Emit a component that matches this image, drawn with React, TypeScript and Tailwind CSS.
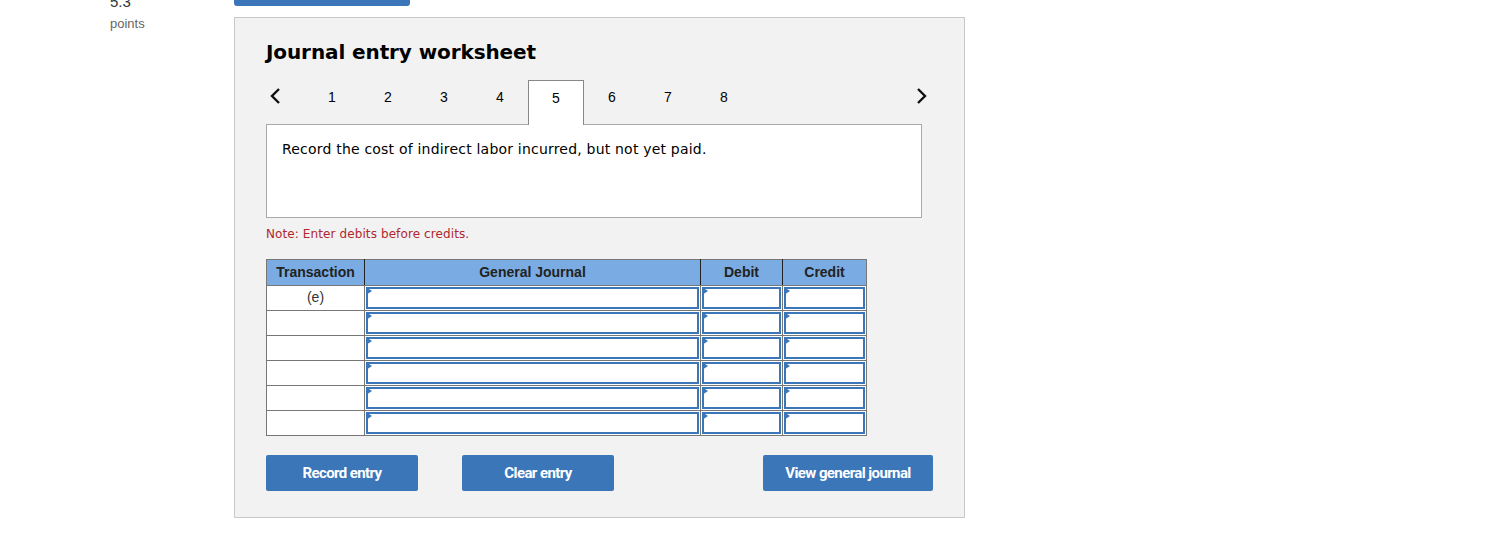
const TABS = [1, 2, 3, 4, 5, 6, 7, 8];
const ACTIVE = 5;
const ROWS = ["(e)", "", "", "", "", ""];

function Cell({ w }: { w: string }) {
  return (
    <td className={`${w} border border-[#777] p-0 bg-white`}>
      <div className="relative h-[22px] m-px border-2 border-[#3a76b8] bg-white">
        <span className="absolute left-[-2px] top-[-2px] w-0 h-0 border-y-[4px] border-y-transparent border-l-[6px] border-l-[#3a76b8]" />
      </div>
    </td>
  );
}

export default function App() {
  return (
    <div className="relative min-h-[539px] bg-white font-['DejaVu_Sans',sans-serif] text-black">
      <div className="absolute left-[110px] top-[-9px] text-[15px] text-[#333] font-['Liberation_Sans',sans-serif]">5.3</div>
      <div className="absolute left-[110px] top-[14px] text-[13px] text-[#666] font-['Liberation_Sans',sans-serif]">points</div>
      <div className="absolute left-[234px] top-0 w-[176px] h-[6px] rounded-b-[3px] bg-[#3a76b8]" />

      <div className="pl-[234px] pt-[17px]">
        <div className="w-[731px] h-[501px] border border-[#c8c8c8] bg-[#f2f2f2] px-[31px]">
          <h1 className="mt-[21px] text-[20px] leading-[26px] font-bold tracking-[-0.1px]">Journal entry worksheet</h1>

          <div className="mt-[15px] flex items-end h-[45px] relative">
            <span className="absolute left-[3px] top-[7px]">
              <svg width="12" height="18" viewBox="0 0 12 18"><path d="M10 2 L3 9 L10 16" fill="none" stroke="#111" strokeWidth="2.4" /></svg>
            </span>
            <div className="ml-[38px] flex font-['Liberation_Sans',sans-serif] text-[14px]">
              {TABS.map((t) =>
                t === ACTIVE ? (
                  <div key={t} className="w-[56px] h-[45px] border border-b-0 border-[#888] bg-white relative z-10 flex justify-center pt-[7px]">{t}</div>
                ) : (
                  <div key={t} className="w-[56px] h-[45px] flex justify-center pt-[7px]">{t}</div>
                )
              )}
            </div>
            <span className="absolute left-[650px] top-[7px]">
              <svg width="12" height="18" viewBox="0 0 12 18"><path d="M2 2 L9 9 L2 16" fill="none" stroke="#111" strokeWidth="2.4" /></svg>
            </span>
          </div>

          <div className="-mt-px w-[656px] h-[94px] border border-[#aaa] bg-white px-[15px] pt-[14px] text-[14px] tracking-[0.2px]">
            Record the cost of indirect labor incurred, but not yet paid.
          </div>

          <p className="mt-[7px] text-[12px] tracking-[0.1px] text-[#b0272e]">Note: Enter debits before credits.</p>

          <table className="mt-[16px] border-collapse font-['Liberation_Sans',sans-serif] text-[14px]">
            <thead>
              <tr className="bg-[#7aace3] h-[26px] text-[#222] font-bold">
                <th className="w-[98px] border border-[#777] border-r-[#222] font-bold">Transaction</th>
                <th className="w-[336px] border border-[#777] border-r-[#222] font-bold">General Journal</th>
                <th className="w-[82px] border border-[#777] border-r-[#222] font-bold">Debit</th>
                <th className="w-[84px] border border-[#777] font-bold">Credit</th>
              </tr>
            </thead>
            <tbody>
              {ROWS.map((r, i) => (
                <tr key={i}>
                  <td className="w-[98px] border border-[#777] bg-white text-center align-top pt-[2px] text-[#333] leading-[18px]">{r}</td>
                  <Cell w="w-[336px]" />
                  <Cell w="w-[82px]" />
                  <Cell w="w-[84px]" />
                </tr>
              ))}
            </tbody>
          </table>

          <div className="mt-[19px] flex text-white text-[15px] font-bold font-['Roboto',sans-serif] tracking-[-0.6px]">
            <button className="w-[152px] h-[36px] rounded-[2px] bg-[#3a76b8]">Record entry</button>
            <button className="ml-[44px] w-[152px] h-[36px] rounded-[2px] bg-[#3a76b8]">Clear entry</button>
            <button className="ml-[149px] w-[170px] h-[36px] rounded-[2px] bg-[#3a76b8]">View general journal</button>
          </div>
        </div>
      </div>
    </div>
  );
}
